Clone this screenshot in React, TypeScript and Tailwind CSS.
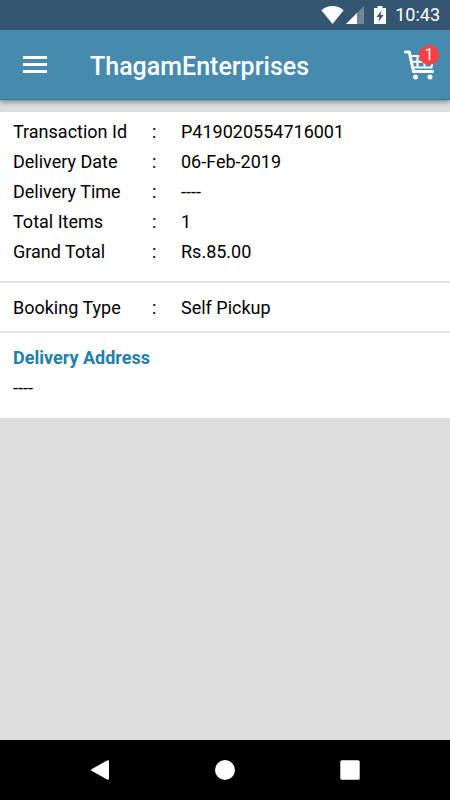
import React from 'react';

interface Detail {
  label: string;
  value: string;
}

const ORDER_DETAILS: Detail[] = [
  { label: 'Transaction Id', value: 'P419020554716001' },
  { label: 'Delivery Date', value: '06-Feb-2019' },
  { label: 'Delivery Time', value: '----' },
  { label: 'Total Items', value: '1' },
  { label: 'Grand Total', value: 'Rs.85.00' },
];

const CART_COUNT = 1;

const StatusBar: React.FC = () => (
  <div className="relative z-10 flex h-[30px] items-center justify-end bg-[#33556f] pr-[10px] text-white">
    <svg className="mr-[2px] h-[18px] w-[23px]" viewBox="0 0 23 18" fill="currentColor" aria-hidden="true">
      <path d="M11.5 18 0.3 4.2C3.4 1.6 7.3 0 11.5 0s8.1 1.6 11.2 4.2z" />
    </svg>
    <svg className="mr-[10px] h-[18px] w-[18px]" viewBox="0 0 18 18" fill="currentColor" aria-hidden="true">
      <path d="M18 0v18H0z" fillOpacity="0.3" />
      <path d="M11 7v11H0z" />
    </svg>
    <svg className="mr-[9px] h-[18px] w-[12px]" viewBox="0 0 12 18" fill="currentColor" aria-hidden="true">
      <path fillRule="evenodd" d="M3.5 0h5v2H11a1 1 0 0 1 1 1v14a1 1 0 0 1-1 1H1a1 1 0 0 1-1-1V3a1 1 0 0 1 1-1h2.5zM7.5 4.5 2.5 11H5.5L4.5 16l5-7H6.5z" />
    </svg>
    <span className="text-[18px] leading-[30px]">10:43</span>
  </div>
);

const CartIcon: React.FC = () => (
  <svg className="h-[30px] w-[31px]" viewBox="0 0 31 30" fill="none" stroke="currentColor" aria-hidden="true">
    <path d="M1.5 2h3.8l4.2 19.5h19" strokeWidth="3" strokeLinecap="round" strokeLinejoin="round" />
    <path d="M6.5 6h22.5l-1.5 11.5H9" strokeWidth="2" />
    <path d="M7 11.8h21M13.5 6v11.5M20.5 6v11.5" strokeWidth="2" />
    <circle cx="11.5" cy="27" r="2.5" fill="currentColor" stroke="none" />
    <circle cx="26" cy="27" r="2.5" fill="currentColor" stroke="none" />
  </svg>
);

const Header: React.FC = () => (
  <header className="flex h-[70px] items-center border-b border-[#2a7ba3] bg-[#468bad] px-[12px] text-white shadow-[0_2px_5px_rgba(0,0,0,0.4)]">
    <button type="button" aria-label="Open menu" className="px-[11px] py-2">
      <svg className="h-[17px] w-[24px]" viewBox="0 0 24 17" fill="currentColor" aria-hidden="true">
        <path d="M0 0h24v3H0zM0 7h24v3H0zM0 14h24v3H0z" />
      </svg>
    </button>
    <h1 className="ml-[32px] flex-1 pt-[5px] text-[25px] font-medium leading-[30px]">ThagamEnterprises</h1>
    <button type="button" aria-label="Cart" className="relative pr-[3px]">
      <CartIcon />
      <span className="absolute -right-px -top-[5px] flex h-5 w-5 items-center justify-center rounded-full bg-[#ff4040] text-[16px] leading-5">
        {CART_COUNT}
      </span>
    </button>
  </header>
);

const DetailRow: React.FC<Detail> = ({ label, value }) => (
  <div className="flex leading-[30px]">
    <dt className="flex-none basis-[139px]">{label}</dt>
    <dd className="flex flex-1">
      <span className="w-[29px]">:</span>
      <span>{value}</span>
    </dd>
  </div>
);

const NavBar: React.FC = () => (
  <nav className="flex h-[60px] items-center justify-around bg-black px-[37px] text-white">
    <button type="button" aria-label="Back" className="flex w-[125px] justify-center">
      <svg className="h-5 w-5" viewBox="0 0 20 20" fill="currentColor" aria-hidden="true">
        <path d="M1.5 9.2 17.5.2Q19 0 19 1v18q0 1-1.5.8L1.5 10.8Q0.5 10 1.5 9.2z" />
      </svg>
    </button>
    <button type="button" aria-label="Home" className="flex w-[125px] justify-center">
      <svg className="h-5 w-5" viewBox="0 0 20 20" fill="currentColor" aria-hidden="true">
        <circle cx="10" cy="10" r="10" />
      </svg>
    </button>
    <button type="button" aria-label="Recent apps" className="flex w-[125px] justify-center">
      <svg className="h-5 w-5" viewBox="0 0 20 20" fill="currentColor" aria-hidden="true">
        <rect x="0.3" y="0.3" width="19.4" height="19.4" rx="1.5" />
      </svg>
    </button>
  </nav>
);

const App: React.FC = () => {
  return (
    <div className="flex min-h-screen flex-col bg-[#dddddd] font-[Roboto,sans-serif] text-black">
      <StatusBar />
      <Header />
      <main className="mt-[12px] flex-1 text-[18px]">
        <section className="border-b-2 border-[#e2e2e2] bg-white px-[13px] pb-[14px] pt-[5px]">
          <dl>
            {ORDER_DETAILS.map(detail => (
              <DetailRow key={detail.label} {...detail} />
            ))}
          </dl>
        </section>
        <section className="border-b-2 border-[#e2e2e2] bg-white px-[13px] pb-[8px] pt-[10px]">
          <dl>
            <DetailRow label="Booking Type" value="Self Pickup" />
          </dl>
        </section>
        <section className="bg-white px-[13px] pb-[15px] pt-[10px] leading-[30px]">
          <h2 className="font-bold text-[#2080a9]">Delivery Address</h2>
          <p>----</p>
        </section>
      </main>
      <NavBar />
    </div>
  );
};

export default App;
